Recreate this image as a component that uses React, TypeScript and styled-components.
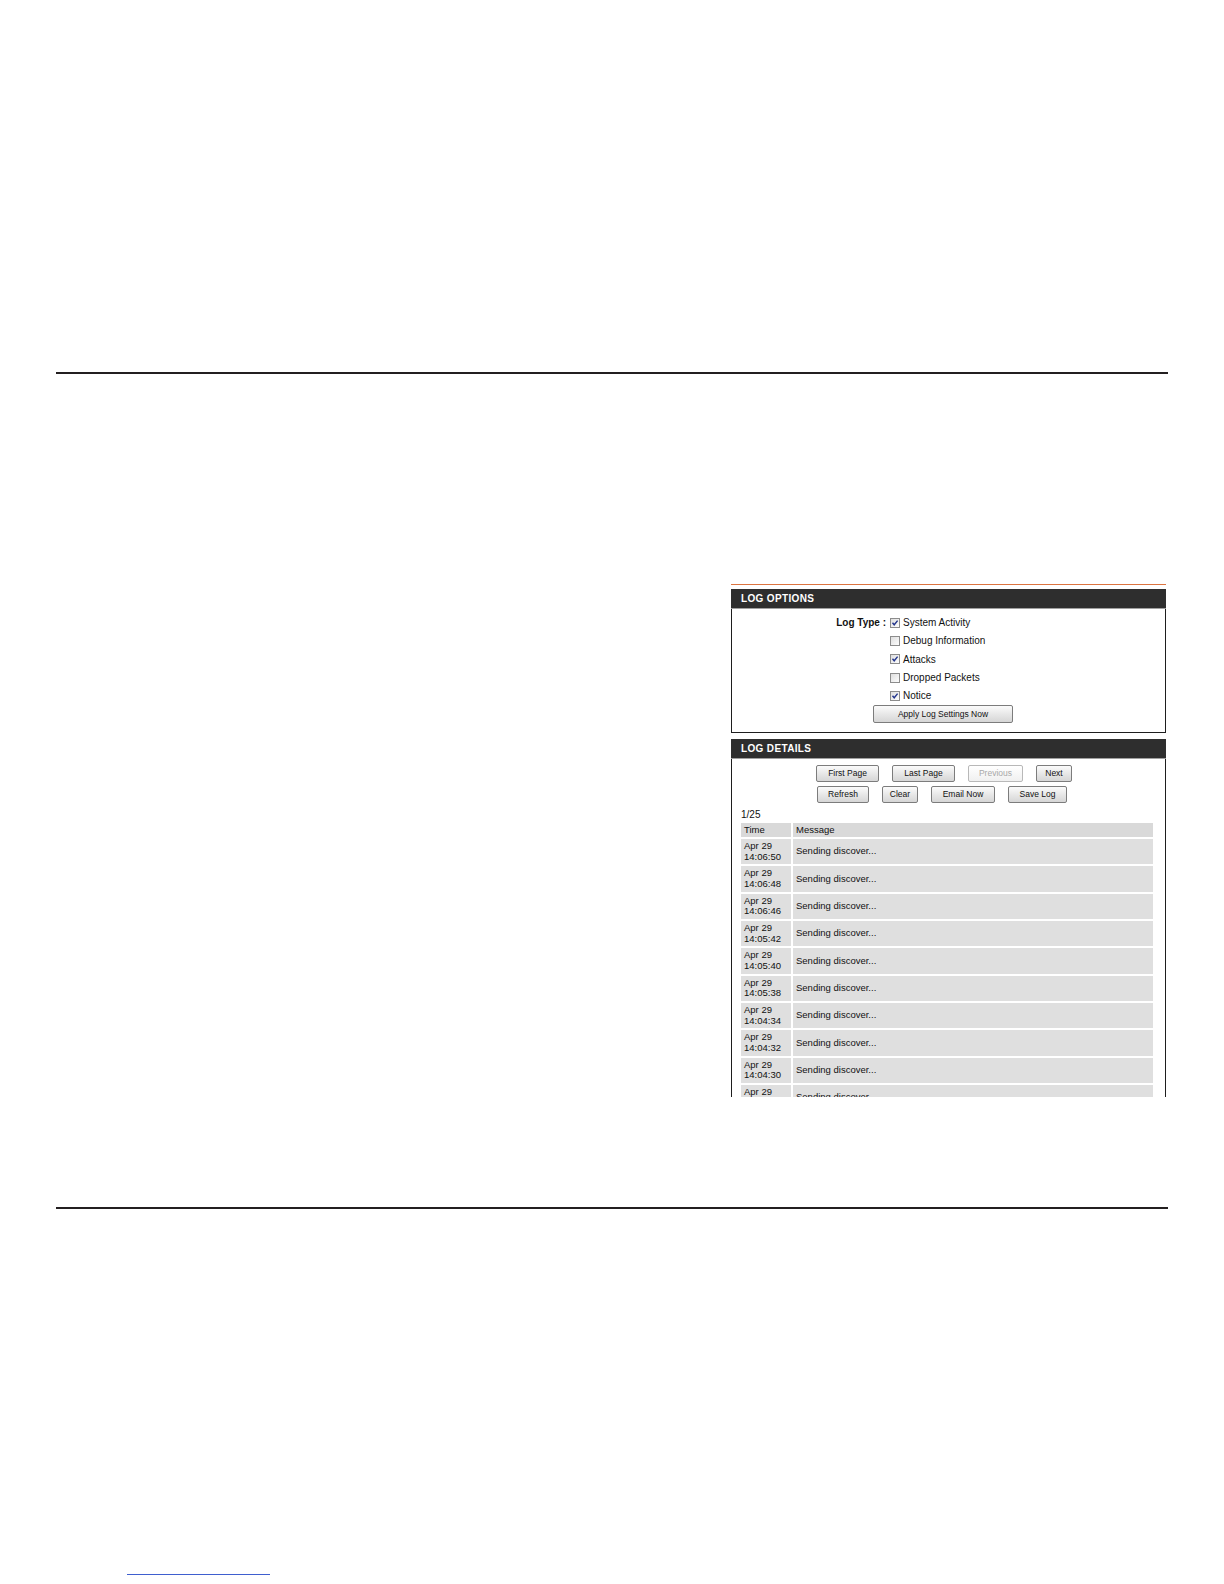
import { Fragment } from "react";
import styled, { createGlobalStyle } from "styled-components";

const GlobalStyle = createGlobalStyle`
  html, body {
    margin: 0;
    padding: 0;
    background: #ffffff;
  }
  body {
    font-family: "Liberation Sans", Arial, sans-serif;
  }
`;

const Page = styled.div`
  width: 1224px;
  height: 1584px;
  background: #fff;
  display: flex;
  flex-direction: column;
  padding: 0 56px;
  box-sizing: border-box;
`;

const Rule = styled.div<{ $top: number }>`
  margin-top: ${(p) => p.$top}px;
  height: 2px;
  flex-shrink: 0;
  background: #231f20;
  width: 1112px;
`;

const Shot = styled.div`
  margin-top: 210px;
  margin-left: 675px;
  width: 435px;
  height: 513px;
  flex-shrink: 0;
  overflow: hidden;
  font-family: "Liberation Sans", Arial, sans-serif;
  color: #111;
`;

const OrangeLine = styled.div`
  height: 1px;
  background: #dc7440;
  margin-bottom: 4px;
`;

const SectionHead = styled.div`
  height: 19px;
  background: #2e2e2e;
  border-bottom: 1px solid #a0a0a0;
  color: #fff;
  font-weight: bold;
  font-size: 10px;
  letter-spacing: 0.35px;
  line-height: 19px;
  padding-left: 10px;
`;

const Box = styled.div<{ $open?: boolean }>`
  border: 1px solid #1e1e1e;
  border-top: none;
  box-sizing: border-box;
  ${(p) => (p.$open ? "border-bottom: none; height: 420px; overflow: hidden;" : "")}
`;

const Spacer = styled.div`
  height: 6px;
`;

const OptionsGrid = styled.div`
  display: grid;
  grid-template-columns: 154px auto;
  column-gap: 4px;
  padding: 4.5px 0 0 0;
  grid-auto-rows: 18.3px;
  align-items: center;
`;

const TypeLabel = styled.div`
  font-weight: bold;
  font-size: 10px;
  text-align: right;
`;

const Check = styled.label`
  display: flex;
  align-items: center;
  gap: 3px;
  font-size: 10px;
  color: #111;
`;

const ApplyRow = styled.div`
  padding: 0 0 9px 141px;
`;

const Btn = styled.div<{ $w: number; $h?: number; $disabled?: boolean }>`
  width: ${(p) => p.$w}px;
  height: ${(p) => p.$h ?? 17}px;
  box-sizing: border-box;
  border: 1px solid ${(p) => (p.$disabled ? "#b8b8b8" : "#7c7c7c")};
  border-radius: 2px;
  background: ${(p) =>
    p.$disabled
      ? "linear-gradient(#ffffff, #f0f0f0)"
      : "linear-gradient(#fbfbfb, #e6e6e6 55%, #d6d6d6)"};
  color: ${(p) => (p.$disabled ? "#a8a8a8" : "#111")};
  font-size: 8.5px;
  display: flex;
  align-items: center;
  justify-content: center;
`;

const BtnRow = styled.div<{ $left: number; $top: number }>`
  display: flex;
  padding-left: ${(p) => p.$left}px;
  margin-top: ${(p) => p.$top}px;
  gap: 13px;
`;

const PageCount = styled.div`
  font-size: 10px;
  line-height: 12px;
  margin: 6px 0 0 9px;
`;

const LogTable = styled.table`
  border-collapse: separate;
  border-spacing: 2px;
  width: 416px;
  margin-left: 7px;
  font-size: 9.5px;
  color: #111;
  table-layout: fixed;
`;

const Th = styled.td<{ $w?: number }>`
  background: #d9d9d9;
  height: 14px;
  padding: 0 3px;
  line-height: 14px;
  box-sizing: border-box;
  ${(p) => (p.$w ? `width: ${p.$w}px;` : "")}
`;

const Td = styled.td`
  background: #dfdfdf;
  height: 25.33px;
  padding: 1px 3px;
  line-height: 10.7px;
  vertical-align: middle;
  box-sizing: border-box;
`;

const Link = styled.div`
  margin-top: 364px;
  margin-left: 71px;
  width: 143px;
  height: 1px;
  flex-shrink: 0;
  border-bottom: 1px solid #3f5fcf;
`;

const CheckBox = ({ checked }: { checked: boolean }) => (
  <svg width="10" height="10" viewBox="0 0 10 10">
    <defs>
      <linearGradient id="cbg" x1="0" y1="0" x2="1" y2="1">
        <stop offset="0" stopColor="#dcdcdc" />
        <stop offset="1" stopColor="#ffffff" />
      </linearGradient>
    </defs>
    <rect x="0.5" y="0.5" width="9" height="9" fill="url(#cbg)" stroke="#8c8c8c" />
    {checked && (
      <path d="M2.5 4.8 L4.2 6.8 L7.6 2.6" fill="none" stroke="#23358c" strokeWidth="1.4" />
    )}
  </svg>
);

const logTypes = [
  { label: "System Activity", checked: true },
  { label: "Debug Information", checked: false },
  { label: "Attacks", checked: true },
  { label: "Dropped Packets", checked: false },
  { label: "Notice", checked: true },
];

const rows = [
  "14:06:50",
  "14:06:48",
  "14:06:46",
  "14:05:42",
  "14:05:40",
  "14:05:38",
  "14:04:34",
  "14:04:32",
  "14:04:30",
  "14:04:28",
];

export default function App() {
  return (
    <>
      <GlobalStyle />
      <Page>
        <Rule $top={372} />
        <Shot>
          <OrangeLine />
          <SectionHead>LOG OPTIONS</SectionHead>
          <Box>
            <OptionsGrid>
              {logTypes.map((t, i) => (
                <Fragment key={t.label}>
                  <TypeLabel>{i === 0 ? "Log Type :" : ""}</TypeLabel>
                  <Check>
                    <CheckBox checked={t.checked} />
                    {t.label}
                  </Check>
                </Fragment>
              ))}
            </OptionsGrid>
            <ApplyRow>
              <Btn $w={140} $h={18}>
                Apply Log Settings Now
              </Btn>
            </ApplyRow>
          </Box>
          <Spacer />
          <SectionHead>LOG DETAILS</SectionHead>
          <Box $open>
            <BtnRow $left={84} $top={6}>
              <Btn $w={63}>First Page</Btn>
              <Btn $w={63}>Last Page</Btn>
              <Btn $w={55} $disabled>
                Previous
              </Btn>
              <Btn $w={36}>Next</Btn>
            </BtnRow>
            <BtnRow $left={85} $top={4}>
              <Btn $w={52}>Refresh</Btn>
              <Btn $w={36}>Clear</Btn>
              <Btn $w={64}>Email Now</Btn>
              <Btn $w={59}>Save Log</Btn>
            </BtnRow>
            <PageCount>1/25</PageCount>
            <LogTable>
              <tbody>
                <tr>
                  <Th $w={50}>Time</Th>
                  <Th>Message</Th>
                </tr>
                {rows.map((time) => (
                  <tr key={time}>
                    <Td>
                      Apr 29
                      <br />
                      {time}
                    </Td>
                    <Td>Sending discover...</Td>
                  </tr>
                ))}
              </tbody>
            </LogTable>
          </Box>
        </Shot>
        <Rule $top={110} />
        <Link />
      </Page>
    </>
  );
}
